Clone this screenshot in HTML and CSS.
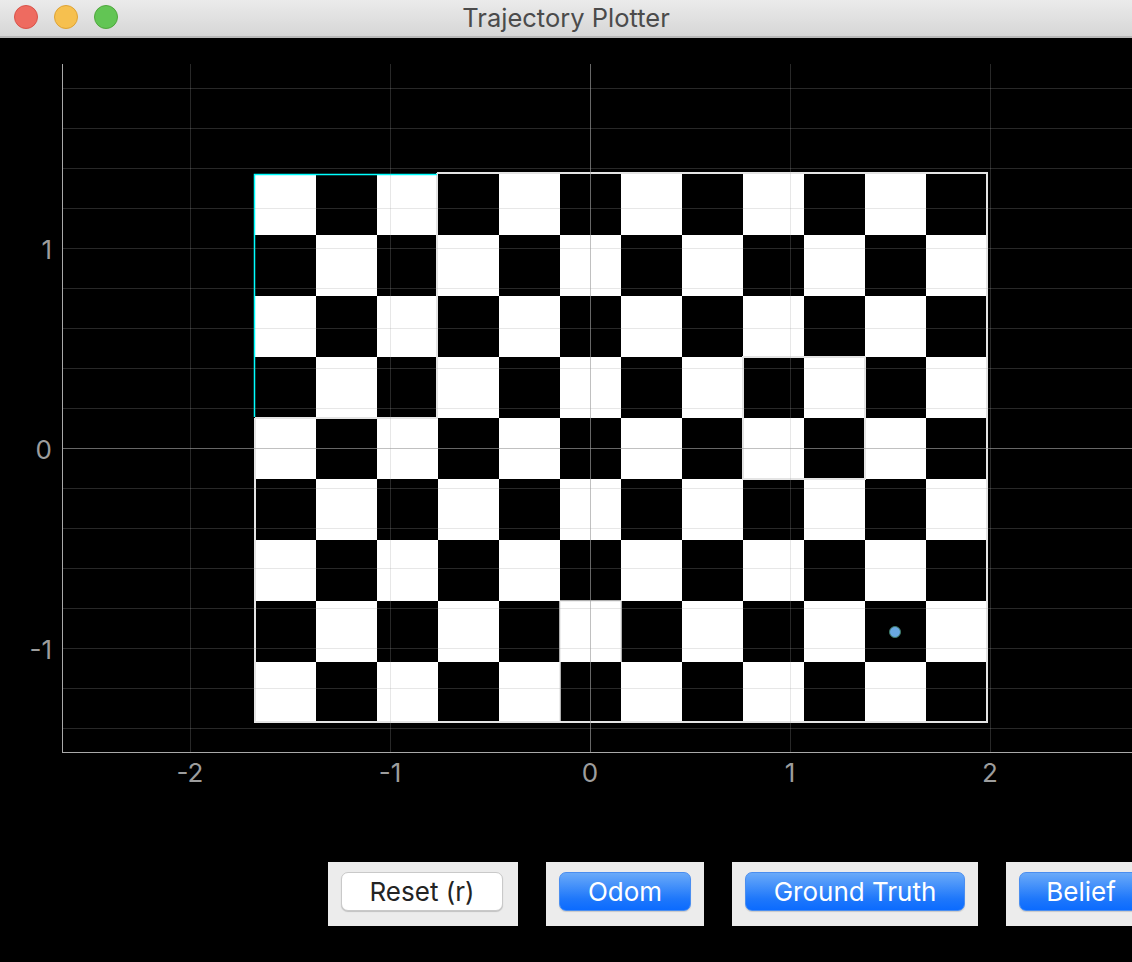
FILE: index.html
```html
<!DOCTYPE html>
<html>
<head>
<meta charset="utf-8">
<title>Trajectory Plotter</title>
<link rel="stylesheet" href="styles.css">
</head>
<body>
<div class="window">
  <header class="titlebar">
    <div class="lights">
      <span class="light light-red"></span>
      <span class="light light-yellow"></span>
      <span class="light light-green"></span>
    </div>
    <h1 class="title">Trajectory Plotter</h1>
    <div class="spacer"></div>
  </header>
  <main class="content">
    <svg class="plot" width="1132" height="824" viewBox="0 38 1132 824" xmlns="http://www.w3.org/2000/svg">
      <defs>
        <pattern id="checker" x="255" y="174" width="122" height="122" patternUnits="userSpaceOnUse">
          <rect x="0" y="0" width="122" height="122" fill="#ffffff"/>
          <rect x="61" y="0" width="61" height="61" fill="#000000"/>
          <rect x="0" y="61" width="61" height="61" fill="#000000"/>
        </pattern>
      </defs>
      <!-- board -->
      <rect x="255" y="174" width="732" height="548" fill="url(#checker)"/>
      <!-- tile edges -->
      <g class="tile-edges">
        <line x1="437" y1="173" x2="988" y2="173"/>
        <line x1="987" y1="172" x2="987" y2="723"/>
        <line x1="254" y1="722" x2="988" y2="722"/>
        <line x1="255" y1="418" x2="255" y2="723"/>
        <line x1="437" y1="173" x2="437" y2="419"/>
        <line x1="255" y1="418" x2="438" y2="418"/>
        <rect x="743" y="357" width="122" height="122" fill="none"/>
      </g>
      <g class="tile-faint">
        <line x1="560" y1="601" x2="560" y2="722"/>
        <line x1="560" y1="601" x2="621" y2="601"/>
        <line x1="621" y1="601" x2="621" y2="662"/>
      </g>
      <path class="tile-cyan" d="M254.5 417 V174.5 H437"/>
      <!-- grid -->
      <g class="grid-minor">
        <line x1="63" y1="88.5" x2="1132" y2="88.5"/>
        <line x1="63" y1="128.5" x2="1132" y2="128.5"/>
        <line x1="63" y1="168.5" x2="1132" y2="168.5"/>
        <line x1="63" y1="208.5" x2="1132" y2="208.5"/>
        <line x1="63" y1="248.5" x2="1132" y2="248.5"/>
        <line x1="63" y1="288.5" x2="1132" y2="288.5"/>
        <line x1="63" y1="328.5" x2="1132" y2="328.5"/>
        <line x1="63" y1="368.5" x2="1132" y2="368.5"/>
        <line x1="63" y1="408.5" x2="1132" y2="408.5"/>
        <line x1="63" y1="488.5" x2="1132" y2="488.5"/>
        <line x1="63" y1="528.5" x2="1132" y2="528.5"/>
        <line x1="63" y1="568.5" x2="1132" y2="568.5"/>
        <line x1="63" y1="608.5" x2="1132" y2="608.5"/>
        <line x1="63" y1="648.5" x2="1132" y2="648.5"/>
        <line x1="63" y1="688.5" x2="1132" y2="688.5"/>
        <line x1="63" y1="728.5" x2="1132" y2="728.5"/>
        <line x1="190.5" y1="64" x2="190.5" y2="752"/>
        <line x1="390.5" y1="64" x2="390.5" y2="752"/>
        <line x1="790.5" y1="64" x2="790.5" y2="752"/>
        <line x1="990.5" y1="64" x2="990.5" y2="752"/>
      </g>
      <g class="grid-zero">
        <line x1="63" y1="448.5" x2="1132" y2="448.5"/>
        <line x1="590.5" y1="64" x2="590.5" y2="752"/>
      </g>
      <!-- axes -->
      <g class="axis">
        <line x1="62.5" y1="64" x2="62.5" y2="753"/>
        <line x1="62" y1="752.5" x2="1132" y2="752.5"/>
      </g>
      <g class="ticks-y">
        <text x="52" y="249">1</text>
        <text x="52" y="449">0</text>
        <text x="52" y="649">-1</text>
      </g>
      <g class="ticks-x">
        <text x="190" y="772">-2</text>
        <text x="390" y="772">-1</text>
        <text x="590" y="772">0</text>
        <text x="790" y="772">1</text>
        <text x="990" y="772">2</text>
      </g>
      <!-- robot position -->
      <circle class="marker" cx="895" cy="632" r="5.5"/>
    </svg>
    <div class="controls">
      <div class="panel panel-reset"><button class="btn btn-plain btn-reset">Reset (r)</button></div>
      <div class="panel"><button class="btn btn-blue btn-odom">Odom</button></div>
      <div class="panel"><button class="btn btn-blue btn-truth">Ground Truth</button></div>
      <div class="panel"><button class="btn btn-blue btn-belief">Belief</button></div>
    </div>
  </main>
</div>
</body>
</html>
```
FILE: styles.css
```css
* { box-sizing: border-box; }

html, body {
  margin: 0;
  padding: 0;
  background: #000;
}

.window {
  width: 1132px;
  height: 962px;
  overflow: hidden;
  background: #000;
  display: flex;
  flex-direction: column;
  font-family: "Inter", "Noto Sans", "Liberation Sans", sans-serif;
}

.titlebar {
  flex: 0 0 38px;
  height: 38px;
  display: grid;
  grid-template-columns: 1fr auto 1fr;
  align-items: center;
  background: linear-gradient(#ebebeb, #d6d6d6);
  border-bottom: 2px solid #b8b8b8;
  padding-bottom: 2px;
}

.lights {
  display: flex;
  gap: 16px;
  padding-left: 14px;
}

.light {
  width: 24px;
  height: 24px;
  border-radius: 50%;
  display: block;
}
.light-red { background: #ee6b60; border: 1px solid #d9534a; }
.light-yellow { background: #f6c04f; border: 1px solid #dea335; }
.light-green { background: #62c554; border: 1px solid #4fa73d; }

.title {
  margin: 0;
  font-size: 25.5px;
  font-weight: 400;
  color: #4b4b4b;
}

.content {
  flex: 1 1 auto;
  display: flex;
  flex-direction: column;
}

.plot {
  display: block;
  flex: 0 0 824px;
}

.tile-edges line,
.tile-edges rect {
  stroke: #e4e4e4;
  stroke-width: 2;
}
.tile-faint line {
  stroke: #e9e9e9;
  stroke-width: 1.5;
}
.tile-cyan {
  fill: none;
  stroke: #00ffff;
  stroke-width: 1.5;
}

.grid-minor line {
  stroke: rgba(160, 160, 160, 0.25);
  stroke-width: 1;
}
.grid-zero line {
  stroke: rgba(158, 158, 158, 0.65);
  stroke-width: 1;
}
.axis line {
  stroke: #a9a9a9;
  stroke-width: 1;
}

.ticks-y text,
.ticks-x text {
  font-family: "Inter", "Noto Sans", "Liberation Sans", sans-serif;
  font-size: 26px;
  fill: #9d9d9d;
  dominant-baseline: central;
}
.ticks-y text { text-anchor: end; }
.ticks-x text { text-anchor: middle; }

.marker {
  fill: #6aa8e2;
  stroke: #3d7a66;
  stroke-width: 1;
}

.controls {
  flex: 0 0 64px;
  display: flex;
  flex-wrap: nowrap;
  gap: 28px;
  padding-left: 328px;
}

.panel {
  flex: 0 0 auto;
  background: #ececec;
  padding: 10px 13px 15px 13px;
  display: flex;
}
.panel-reset { padding-right: 15px; }

.btn {
  height: 39px;
  border-radius: 7px;
  font-family: "Inter", "Noto Sans", "Liberation Sans", sans-serif;
  font-size: 26px;
  font-weight: 400;
  padding: 0;
  margin: 0;
  line-height: 1;
  flex: 0 0 auto;
}

.btn-plain {
  background: #ffffff;
  color: #232323;
  border: 1px solid #c9c9c9;
  box-shadow: 0 1px 1px rgba(0, 0, 0, 0.18);
}

.btn-blue {
  color: #ffffff;
  background: linear-gradient(#6aaaf9, #1e77fb 70%, #0b6bff);
  border: 1px solid #4a8ef0;
  box-shadow: 0 1px 1px rgba(0, 0, 0, 0.15);
}

.btn-reset { width: 162px; }
.btn-odom { width: 132px; }
.btn-truth { width: 220px; }
.btn-belief { width: 124px; }
```
